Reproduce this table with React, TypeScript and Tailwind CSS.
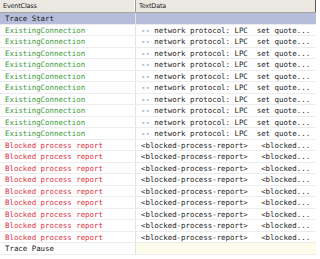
import React from "react";

type Row = { event: string; text: string; kind: "start" | "conn" | "blocked" | "pause" };

const rows: Row[] = [
    { event: "Trace Start", text: "", kind: "start" },
    ...Array(10).fill(0).map(() => ({ event: "ExistingConnection", text: "-- network protocol: LPC  set quote...", kind: "conn" as const })),
    ...Array(9).fill(0).map(() => ({ event: "Blocked process report", text: "<blocked-process-report>   <blocked...", kind: "blocked" as const })),
    { event: "Trace Pause", text: "", kind: "pause" },
];

const App = () => {
    return (
        <div className="w-[320px] h-[259px] bg-white overflow-hidden">
            <div className="w-[316px]">
                <div className="flex h-[13px] bg-[#ece9e3] border-b border-[#a7a49c] text-[6.5px] text-[#222] font-['DejaVu_Sans',sans-serif] leading-[12px] tracking-[-0.2px]">
                    <div className="w-[136px] pl-[3px] border-r border-[#9c9a93] shadow-[inset_-1px_0_0_#fff]">EventClass</div>
                    <div className="flex-1 pl-[3px] border-r border-[#5e5c58]">TextData</div>
                </div>

                {rows.map((r, i) => (
                    <div
                        key={i}
                        className={`flex h-[11.5px] border-b border-[#ececec] font-['DejaVu_Sans_Mono',monospace] text-[7.4px] leading-[11px] whitespace-pre ${r.kind === "start" ? "bg-[#b6bdda]" : ""}`}
                    >
                        <div
                            className={`w-[136px] pl-[5px] border-r border-[#e2e2e2] ${
                                r.kind === "conn" ? "text-[#3a9a3a]" : r.kind === "blocked" ? "text-[#e0313e]" : "text-[#1a1a1a]"
                            } ${r.kind === "start" ? "border-[#aeb5d2]" : ""}`}
                        >
                            {r.event}
                        </div>
                        <div className={`flex-1 pl-[5px] text-[#1a1a1a] ${r.kind === "pause" ? "bg-[#fdfbe9]" : ""}`}>{r.text}</div>
                    </div>
                ))}
            </div>
        </div>
    );
};

export default App;
